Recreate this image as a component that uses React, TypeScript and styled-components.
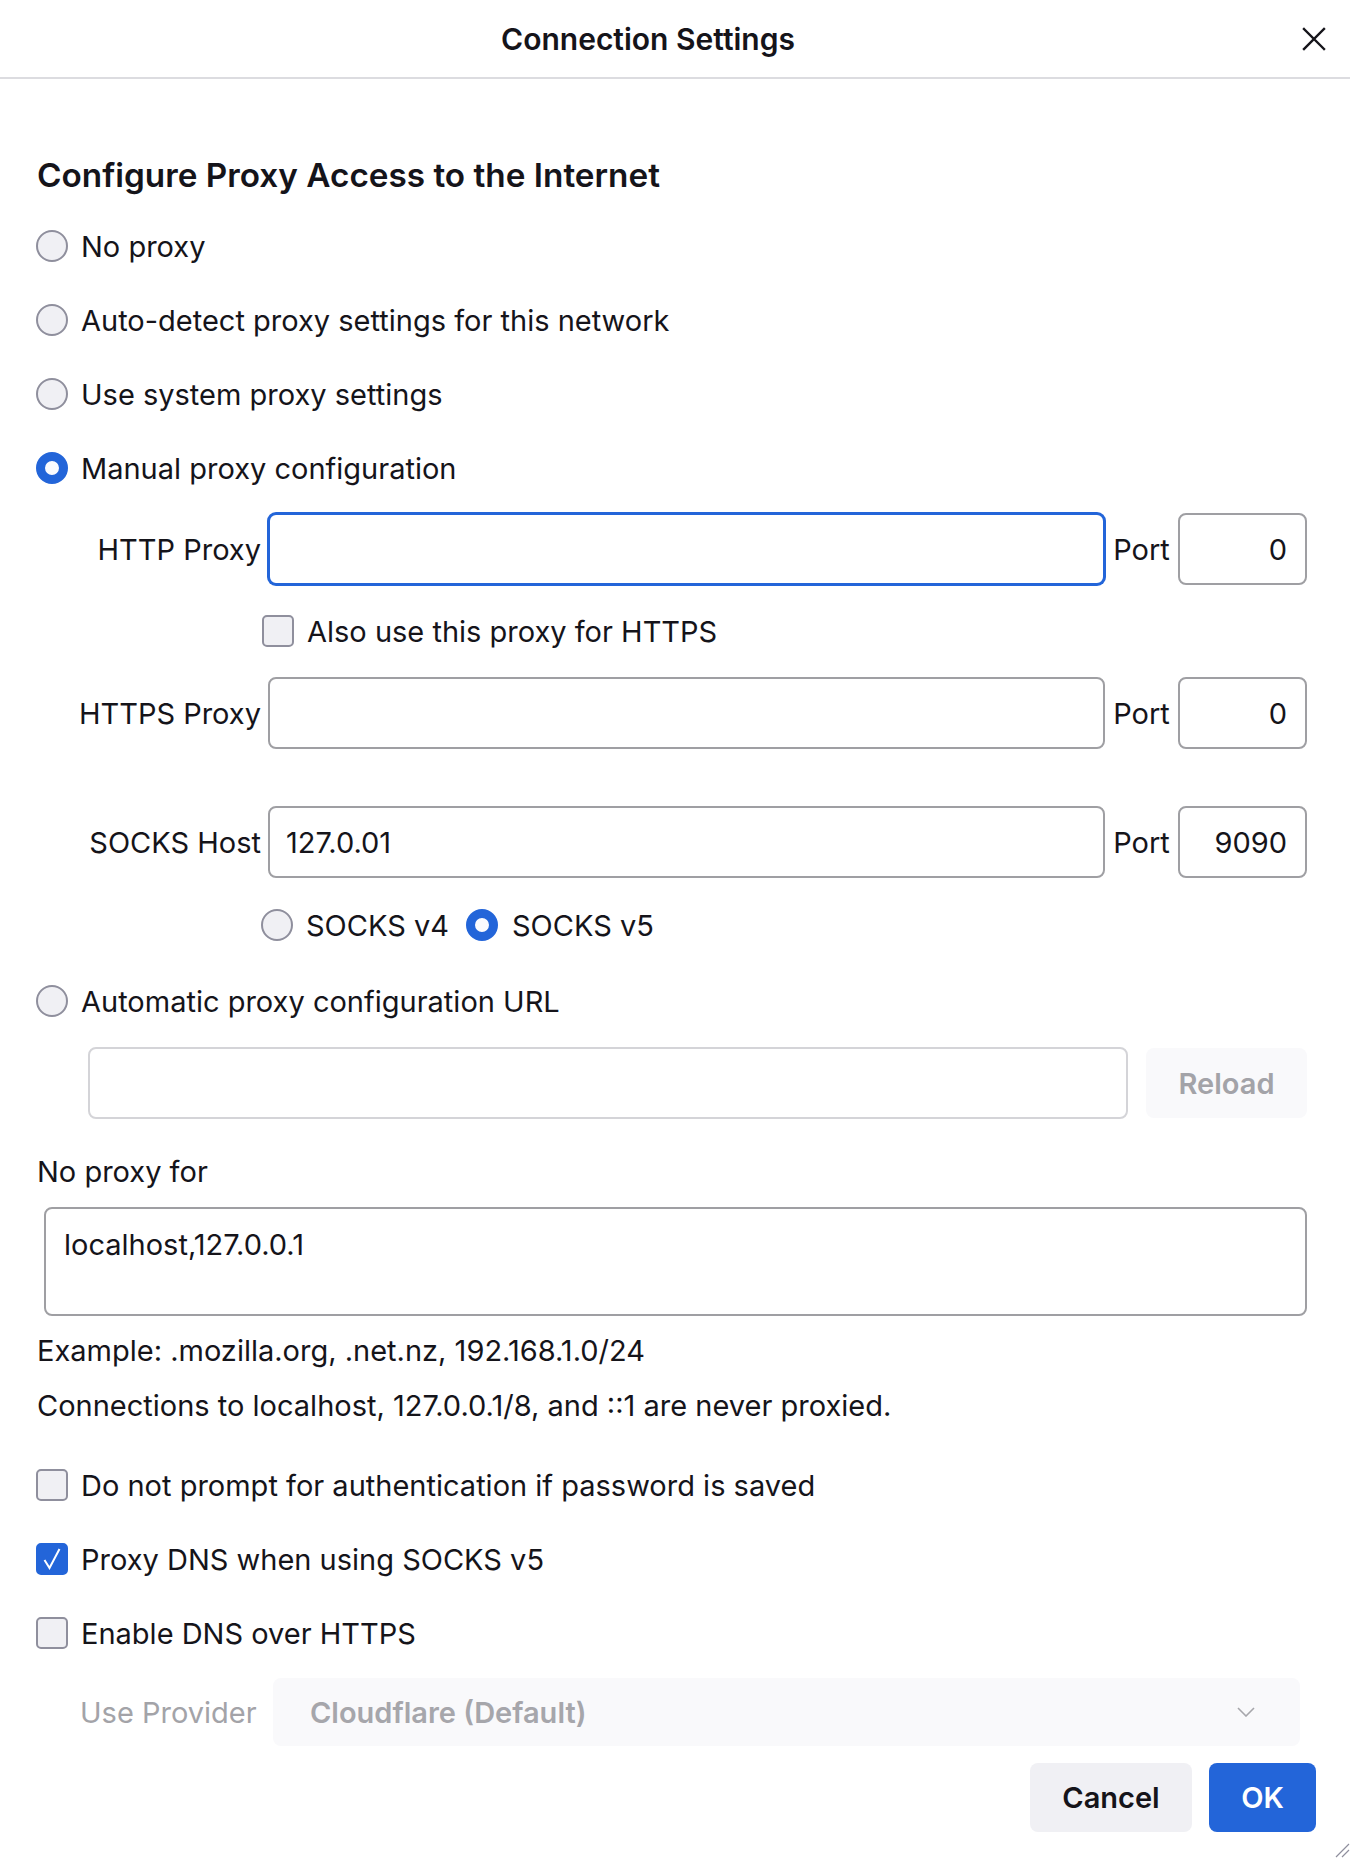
import React from 'react';
import styled, { createGlobalStyle } from 'styled-components';

const GlobalStyle = createGlobalStyle`
  html, body { margin: 0; padding: 0; background: #fff; }
  body {
    font-family: Inter, "Noto Sans", sans-serif;
    color: #15141a;
    -webkit-font-smoothing: antialiased;
  }
`;

const BLUE = '#2365d9';
const FS = 29;

const Dialog = styled.div`
  position: relative;
  width: 1350px;
  height: 1858px;
  background: #fff;
  overflow: hidden;
`;

const Header = styled.header`
  display: flex;
  align-items: center;
  height: 77px;
  border-bottom: 2px solid #dcdce0;
`;

const Title = styled.h2`
  flex: 1;
  margin: 0;
  text-align: center;
  font-size: 30px;
  font-weight: 600;
`;

const CloseButton = styled.button`
  display: flex;
  align-items: center;
  justify-content: center;
  width: 36px;
  height: 36px;
  margin-right: 18px;
  padding: 0;
  border: none;
  background: transparent;
  color: #15141a;
`;

const Body = styled.main`
  display: flex;
  flex-direction: column;
  padding: 0 43px 0 37px;
`;

const Heading = styled.h1`
  margin: 76px 0 0;
  font-size: 33.3px;
  font-weight: 600;
  line-height: 40px;
`;

const OptionRow = styled.label<{ $mt?: number; $ml?: number; $gap?: number }>`
  display: flex;
  align-items: center;
  gap: ${p => p.$gap ?? 13}px;
  height: 40px;
  margin-top: ${p => p.$mt ?? 0}px;
  margin-left: ${p => p.$ml ?? -1}px;
  font-size: ${FS}px;
  white-space: nowrap;
`;

const Radio = styled.span<{ $checked?: boolean }>`
  box-sizing: border-box;
  flex: none;
  width: 32px;
  height: 32px;
  border-radius: 50%;
  background: ${p => (p.$checked ? '#fbfbfe' : '#f0f0f4')};
  border: ${p => (p.$checked ? `9px solid ${BLUE}` : '2px solid #8f8f9d')};
`;

const Checkbox = styled.span<{ $checked?: boolean }>`
  box-sizing: border-box;
  flex: none;
  display: flex;
  align-items: center;
  justify-content: center;
  width: 32px;
  height: 32px;
  border-radius: 5px;
  background: ${p => (p.$checked ? BLUE : '#f0f0f4')};
  border: 2px solid ${p => (p.$checked ? BLUE : '#8f8f9d')};
`;

const FieldRow = styled.div<{ $mt: number }>`
  display: grid;
  grid-template-columns: 231px 1fr 73px 129px;
  align-items: center;
  margin-top: ${p => p.$mt}px;
  min-height: 40px;
`;

const FieldLabel = styled.span`
  padding-right: 7px;
  text-align: right;
  font-size: ${FS}px;
  white-space: nowrap;
`;

const PortLabel = styled.span`
  text-align: center;
  font-size: ${FS}px;
`;

const Field = styled.input<{ $focused?: boolean; $right?: boolean; $muted?: boolean }>`
  box-sizing: border-box;
  width: 100%;
  height: 72px;
  margin: 0;
  padding: 0 18px 0 16px;
  font: inherit;
  font-size: ${FS}px;
  color: #15141a;
  text-align: ${p => (p.$right ? 'right' : 'left')};
  background: #fff;
  border-radius: 8px;
  border: 2px solid ${p => (p.$focused ? BLUE : p.$muted ? '#d4d4d8' : '#9f9fa3')};
  box-shadow: ${p => (p.$focused ? `0 0 0 1px ${BLUE}` : 'none')};
  outline: none;
`;

const Cell = styled.div<{ $ml?: number }>`
  display: flex;
  align-items: center;
  margin-left: ${p => p.$ml ?? 0}px;
`;

const UrlRow = styled.div`
  display: flex;
  align-items: center;
  gap: 18px;
  margin-top: 26px;
  padding-left: 51px;
`;

const ReloadButton = styled.button`
  flex: none;
  width: 161px;
  height: 70px;
  border: none;
  border-radius: 8px;
  background: #f9f9fb;
  color: #a3a3a8;
  font: inherit;
  font-size: ${FS}px;
  font-weight: 600;
`;

const Text = styled.div<{ $mt: number }>`
  margin-top: ${p => p.$mt}px;
  font-size: ${FS}px;
  line-height: 40px;
`;

const TextArea = styled.textarea`
  box-sizing: border-box;
  display: block;
  width: calc(100% - 7px);
  height: 109px;
  margin: 15px 0 0 7px;
  padding: 16px 18px;
  font: inherit;
  font-size: ${FS}px;
  line-height: 40px;
  color: #15141a;
  border: 2px solid #9f9fa3;
  border-radius: 8px;
  resize: none;
  outline: none;
`;

const ProviderRow = styled.div`
  display: flex;
  align-items: center;
  gap: 17px;
  margin-top: 25px;
  padding-left: 43px;
  padding-right: 7px;
`;

const ProviderLabel = styled.span`
  flex: none;
  width: 176px;
  font-size: ${FS}px;
  color: #a3a3a8;
  white-space: nowrap;
`;

const Select = styled.div`
  flex: 1;
  display: flex;
  align-items: center;
  justify-content: space-between;
  height: 68px;
  padding: 0 45px 0 37px;
  border-radius: 8px;
  background: #f9f9fb;
  color: #a6a6ab;
  font-size: ${FS}px;
  font-weight: 600;
`;

const Footer = styled.div`
  display: flex;
  justify-content: flex-end;
  gap: 17px;
  margin: 17px -9px 0 0;
`;

const Button = styled.button<{ $primary?: boolean }>`
  height: 69px;
  min-width: ${p => (p.$primary ? 107 : 162)}px;
  padding: 0 26px;
  border: none;
  border-radius: 8px;
  font: inherit;
  font-size: ${FS}px;
  font-weight: 600;
  background: ${p => (p.$primary ? BLUE : '#f0f0f4')};
  color: ${p => (p.$primary ? '#fff' : '#15141a')};
`;

const Grip = styled.svg`
  position: absolute;
  right: 0;
  bottom: 0;
`;

const X = () => (
  <svg width="24" height="24" viewBox="0 0 24 24" fill="none" stroke="currentColor" strokeWidth="2.4" strokeLinecap="square">
    <path d="M2 2 L22 22 M22 2 L2 22" />
  </svg>
);

const Check = () => (
  <svg width="20" height="24" viewBox="0 0 20 24" fill="none" stroke="#fff" strokeWidth="2">
    <path d="M2.5 13 L7.5 21 L17.5 2" />
  </svg>
);

const Chevron = () => (
  <svg width="18" height="10" viewBox="0 0 18 10" fill="none" stroke="#a6a6ab" strokeWidth="1.6">
    <path d="M1 1 L9 9 L17 1" />
  </svg>
);

const radios = [
  { label: 'No proxy', mt: 31 },
  { label: 'Auto-detect proxy settings for this network', mt: 34 },
  { label: 'Use system proxy settings', mt: 34 },
  { label: 'Manual proxy configuration', mt: 34, checked: true },
];

const App = () => {
  return (
    <>
      <GlobalStyle />
      <Dialog>
        <Header>
          <Title>Connection Settings</Title>
          <CloseButton aria-label="Close">
            <X />
          </CloseButton>
        </Header>

        <Body>
          <Heading>Configure Proxy Access to the Internet</Heading>

          {radios.map(r => (
            <OptionRow key={r.label} $mt={r.mt}>
              <Radio $checked={r.checked} />
              {r.label}
            </OptionRow>
          ))}

          <FieldRow $mt={25}>
            <FieldLabel>HTTP Proxy</FieldLabel>
            <Field $focused readOnly value="" />
            <PortLabel>Port</PortLabel>
            <Field $right readOnly value="0" />
          </FieldRow>

          <FieldRow $mt={26}>
            <span />
            <OptionRow $ml={-6}>
              <Checkbox />
              Also use this proxy for HTTPS
            </OptionRow>
          </FieldRow>

          <FieldRow $mt={26}>
            <FieldLabel>HTTPS Proxy</FieldLabel>
            <Field readOnly value="" />
            <PortLabel>Port</PortLabel>
            <Field $right readOnly value="0" />
          </FieldRow>

          <FieldRow $mt={57}>
            <FieldLabel>SOCKS Host</FieldLabel>
            <Field readOnly value="127.0.01" />
            <PortLabel>Port</PortLabel>
            <Field $right readOnly value="9090" />
          </FieldRow>

          <FieldRow $mt={27}>
            <span />
            <Cell $ml={-7}>
              <OptionRow $ml={0}>
                <Radio />
                SOCKS v4
              </OptionRow>
              <OptionRow $ml={17} $gap={14}>
                <Radio $checked />
                SOCKS v5
              </OptionRow>
            </Cell>
          </FieldRow>

          <OptionRow $mt={36}>
            <Radio />
            Automatic proxy configuration URL
          </OptionRow>

          <UrlRow>
            <Field $muted readOnly value="" />
            <ReloadButton>Reload</ReloadButton>
          </UrlRow>

          <Text $mt={33}>No proxy for</Text>
          <TextArea readOnly value="localhost,127.0.0.1" />

          <Text $mt={15}>Example: .mozilla.org, .net.nz, 192.168.1.0/24</Text>
          <Text $mt={15}>Connections to localhost, 127.0.0.1/8, and ::1 are never proxied.</Text>

          <OptionRow $mt={39}>
            <Checkbox />
            Do not prompt for authentication if password is saved
          </OptionRow>
          <OptionRow $mt={34}>
            <Checkbox $checked>
              <Check />
            </Checkbox>
            Proxy DNS when using SOCKS v5
          </OptionRow>
          <OptionRow $mt={34}>
            <Checkbox />
            Enable DNS over HTTPS
          </OptionRow>

          <ProviderRow>
            <ProviderLabel>Use Provider</ProviderLabel>
            <Select>
              Cloudflare (Default)
              <Chevron />
            </Select>
          </ProviderRow>

          <Footer>
            <Button>Cancel</Button>
            <Button $primary>OK</Button>
          </Footer>
        </Body>

        <Grip width="20" height="20" viewBox="0 0 20 20" fill="none" stroke="#8f8f9d" strokeWidth="1.2">
          <path d="M19 6 L6 19 M19 12 L12 19" />
        </Grip>
      </Dialog>
    </>
  );
};

export default App;
